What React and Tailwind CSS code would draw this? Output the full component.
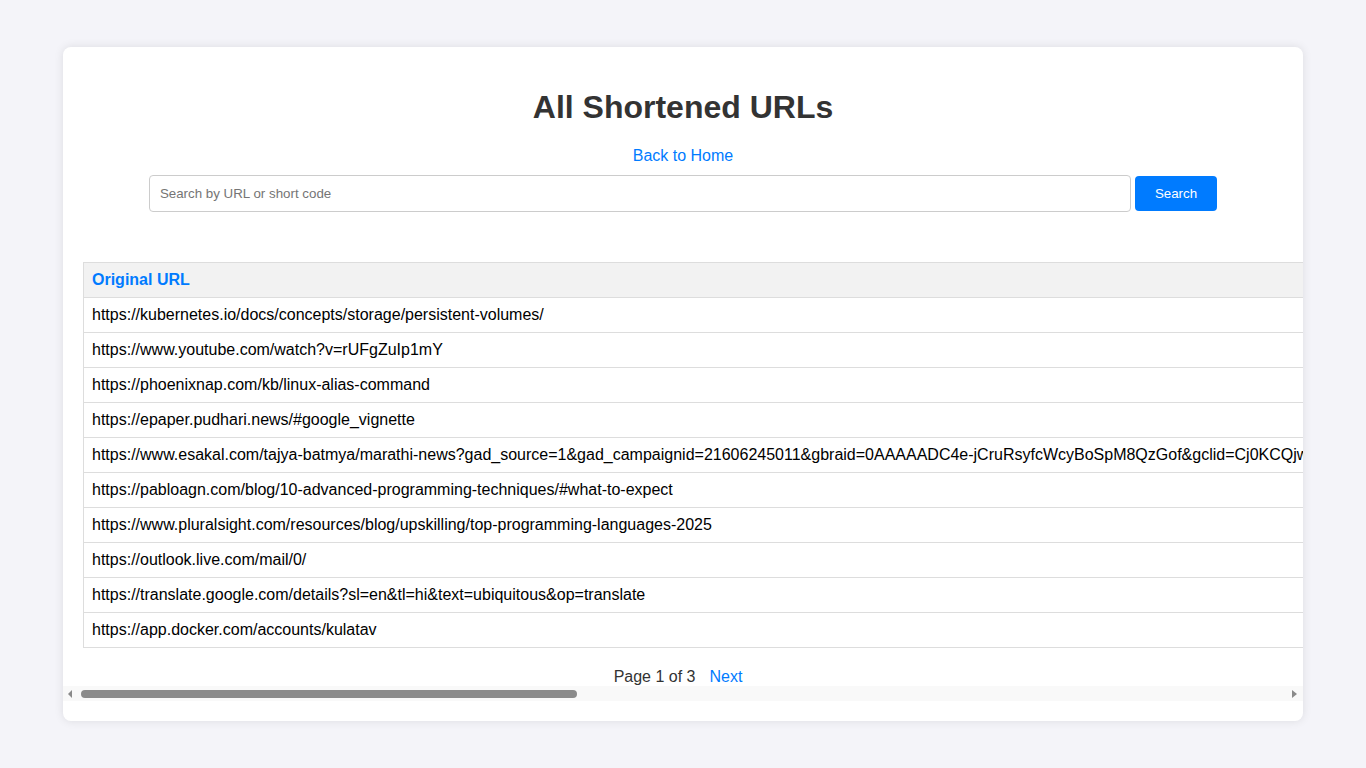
import React from 'react';

const urls = [
  { original: 'https://kubernetes.io/docs/concepts/storage/persistent-volumes/', code: 'k8sPv1', clicks: 4, created: '2025-06-10 09:14:22' },
  { original: 'https://www.youtube.com/watch?v=rUFgZuIp1mY', code: 'ytRuF2', clicks: 12, created: '2025-06-10 10:02:41' },
  { original: 'https://phoenixnap.com/kb/linux-alias-command', code: 'pnxAl3', clicks: 2, created: '2025-06-11 14:37:05' },
  { original: 'https://epaper.pudhari.news/#google_vignette', code: 'pdhEp4', clicks: 7, created: '2025-06-11 18:21:50' },
  {
    original:
      'https://www.esakal.com/tajya-batmya/marathi-news?gad_source=1&gad_campaignid=21606245011&gbraid=0AAAAADC4e-jCruRsyfcWcyBoSpM8QzGof&gclid=Cj0KCQjwmK_CBhCEARIsAMKwcD5kS8vRnx7Lp4Yq2Hd0TzWfJ9aG3bNcXeUu1oVj6iQsPtMRl_8yE0AaAtT3EALw_wcB',
    code: 'eskMr5',
    clicks: 1,
    created: '2025-06-12 08:45:13',
  },
  { original: 'https://pabloagn.com/blog/10-advanced-programming-techniques/#what-to-expect', code: 'pblAd6', clicks: 3, created: '2025-06-12 11:09:38' },
  { original: 'https://www.pluralsight.com/resources/blog/upskilling/top-programming-languages-2025', code: 'plsTp7', clicks: 5, created: '2025-06-13 16:52:19' },
  { original: 'https://outlook.live.com/mail/0/', code: 'outMl8', clicks: 9, created: '2025-06-14 07:30:02' },
  { original: 'https://translate.google.com/details?sl=en&tl=hi&text=ubiquitous&op=translate', code: 'trnUb9', clicks: 6, created: '2025-06-14 13:16:44' },
  { original: 'https://app.docker.com/accounts/kulatav', code: 'dckAc0', clicks: 2, created: '2025-06-15 19:58:27' },
];

// classic-looking horizontal scrollbar under the scroll area
function ScrollBar() {
  return (
    <div className="flex h-[15px] items-center bg-[#f9f9f9]">
      <div className="ml-[5px] h-0 w-0 border-y-[4px] border-r-[4px] border-y-transparent border-r-[#8a8a8a]" />
      <div className="ml-[9px] h-[8px] w-[496px] rounded-full bg-[#8b8b8b]" />
      <div className="ml-auto mr-[6px] h-0 w-0 border-y-[4px] border-l-[5px] border-y-transparent border-l-[#8a8a8a]" />
    </div>
  );
}

export default function App() {
  return (
    <div className="min-h-screen bg-[#f4f4f9] pt-[47px] pb-[47px] font-['Liberation_Sans',Arial,sans-serif] leading-[normal] text-[#333]">
      <div className="mx-auto w-[1240px] overflow-hidden rounded-lg bg-white pb-5 shadow-[0_0_10px_rgba(0,0,0,0.1)]">
        <div className="overflow-x-auto px-5 pt-[21px] [scrollbar-width:none]">
          <h1 className="my-[21px] text-center text-[32px] font-bold text-[#333]">All Shortened URLs</h1>
          <div className="text-center">
            <a href="#" className="text-[#007bff]">Back to Home</a>
          </div>
          <form className="mt-[10px] flex w-[1200px] items-center justify-center gap-1" onSubmit={(e) => e.preventDefault()}>
            <input
              type="text"
              placeholder="Search by URL or short code"
              className="w-[982px] rounded border border-[#ccc] bg-white p-[10px] text-[13.333px] text-black placeholder:text-[#757575] focus:outline-none"
            />
            <button type="submit" className="rounded bg-[#007bff] px-5 py-[10px] text-[13.333px] text-white">
              Search
            </button>
          </form>

          <table className="mt-[50px] w-[3000px] border-collapse border border-[#ddd] text-left text-black">
            <thead>
              <tr className="bg-[#f2f2f2]">
                <th className="border border-[#ddd] p-2 font-bold text-[#007bff]">Original URL</th>
                <th className="border border-[#ddd] p-2 font-bold text-[#007bff]">Short URL</th>
                <th className="border border-[#ddd] p-2 font-bold text-[#007bff]">Clicks</th>
                <th className="border border-[#ddd] p-2 font-bold text-[#007bff]">Created At</th>
              </tr>
            </thead>
            <tbody>
              {urls.map((u) => (
                <tr key={u.code}>
                  <td className="whitespace-nowrap border border-[#ddd] p-2">{u.original}</td>
                  <td className="whitespace-nowrap border border-[#ddd] p-2">
                    <a href="#" className="text-[#007bff]">http://localhost:5000/{u.code}</a>
                  </td>
                  <td className="whitespace-nowrap border border-[#ddd] p-2">{u.clicks}</td>
                  <td className="whitespace-nowrap border border-[#ddd] p-2">{u.created}</td>
                </tr>
              ))}
            </tbody>
          </table>

          <div className="mt-5 w-[1200px] text-center">
            <span>Page 1 of 3</span>
            <a href="#" className="ml-[14px] mr-[10px] text-[#007bff]">Next</a>
          </div>
        </div>
        <ScrollBar />
      </div>
    </div>
  );
}
